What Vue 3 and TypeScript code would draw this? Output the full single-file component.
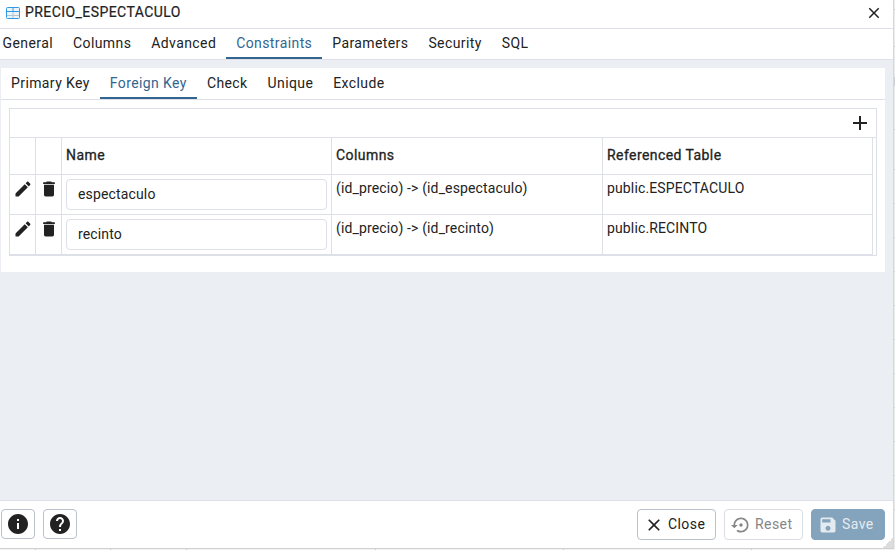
<script setup lang="ts">
import { ref } from 'vue'

interface ForeignKey {
  name: string
  columns: string
  referenced: string
}

const mainTabs: string[] = ['General', 'Columns', 'Advanced', 'Constraints', 'Parameters', 'Security', 'SQL']
const constraintTabs: string[] = ['Primary Key', 'Foreign Key', 'Check', 'Unique', 'Exclude']
const activeMain = ref('Constraints')
const activeConstraint = ref('Foreign Key')

const keys = ref<ForeignKey[]>([
  { name: 'espectaculo', columns: '(id_precio) -> (id_espectaculo)', referenced: 'public.ESPECTACULO' },
  { name: 'recinto', columns: '(id_precio) -> (id_recinto)', referenced: 'public.RECINTO' },
])

const closePath =
  'M19 6.41 17.59 5 12 10.59 6.41 5 5 6.41 10.59 12 5 17.59 6.41 19 12 13.41 17.59 19 19 17.59 13.41 12z'

// Row lines of the page that stay visible right of and below the dialog.
const sideLines: number[] = [10, 37, 39, 44, 40, 34, 34, 34, 34, 34, 34, 34, 34, 34, 34]
const bottomCells: number[] = [36, 75, 76, 189, 188, 188]
</script>

<template>
  <div class="page">
    <div class="upper">
      <section class="dialog">
        <header class="title-bar">
          <svg class="table-icon" viewBox="0 0 14 12">
            <rect x=".5" y=".5" width="13" height="11" rx="1" fill="#eef3f7" stroke="#2f9be8" />
            <path d="M1 8.5h12M7 4v7" stroke="#b5c6d3" fill="none" />
            <path d="M1 4.5h12M7 1v3" stroke="#2f9be8" fill="none" />
          </svg>
          <span class="title">PRECIO_ESPECTACULO</span>
          <svg class="close-icon" viewBox="0 0 24 24"><path :d="closePath" /></svg>
        </header>

        <nav class="tabs main-tabs">
          <button
            v-for="tab in mainTabs"
            :key="tab"
            class="tab"
            :class="{ active: tab === activeMain }"
            @click="activeMain = tab"
          >{{ tab }}</button>
        </nav>

        <main class="body">
          <div class="panel">
            <nav class="tabs sub-tabs">
              <button
                v-for="tab in constraintTabs"
                :key="tab"
                class="tab"
                :class="{ active: tab === activeConstraint }"
                @click="activeConstraint = tab"
              >{{ tab }}</button>
            </nav>
            <div class="grid-box">
              <div class="toolbar">
                <svg class="add-icon" viewBox="0 0 24 24"><path d="M19 13h-6v6h-2v-6H5v-2h6V5h2v6h6v2z" /></svg>
              </div>
              <div class="table">
                <div class="row head">
                  <div class="cell"></div>
                  <div class="cell"></div>
                  <div class="cell">Name</div>
                  <div class="cell">Columns</div>
                  <div class="cell">Referenced Table</div>
                </div>
                <div v-for="key in keys" :key="key.referenced" class="row">
                  <div class="cell icon-cell">
                    <svg viewBox="0 0 24 24"><path d="M3 17.25V21h3.75L17.81 9.94l-3.75-3.75L3 17.25zM20.71 7.04c.39-.39.39-1.02 0-1.41l-2.34-2.34c-.39-.39-1.02-.39-1.41 0l-1.83 1.83 3.75 3.75 1.83-1.83z" /></svg>
                  </div>
                  <div class="cell icon-cell">
                    <svg viewBox="0 0 24 24"><path d="M6 19c0 1.1.9 2 2 2h8c1.1 0 2-.9 2-2V7H6v12zM19 4h-3.5l-1-1h-5l-1 1H5v2h14V4z" /></svg>
                  </div>
                  <div class="cell"><input v-model="key.name" class="name-input" type="text" /></div>
                  <div class="cell">{{ key.columns }}</div>
                  <div class="cell">{{ key.referenced }}</div>
                </div>
              </div>
            </div>
          </div>
        </main>

        <footer class="footer">
          <button class="btn icon-btn">
            <svg viewBox="0 0 24 24"><path d="M12 2C6.48 2 2 6.48 2 12s4.48 10 10 10 10-4.48 10-10S17.52 2 12 2zm1 15h-2v-6h2v6zm0-8h-2V7h2v2z" /></svg>
          </button>
          <button class="btn icon-btn">
            <svg viewBox="0 0 24 24"><path d="M12 2C6.48 2 2 6.48 2 12s4.48 10 10 10 10-4.48 10-10S17.52 2 12 2zm1 17h-2v-2h2v2zm2.07-7.75l-.9.92C13.45 12.9 13 13.5 13 15h-2v-.5c0-1.1.45-2.1 1.17-2.83l1.24-1.26c.37-.36.59-.86.59-1.41 0-1.1-.9-2-2-2s-2 .9-2 2H8c0-2.21 1.79-4 4-4s4 1.79 4 4c0 .88-.36 1.68-.93 2.25z" /></svg>
          </button>
          <span class="spacer"></span>
          <button class="btn close-btn">
            <svg viewBox="0 0 24 24"><path :d="closePath" /></svg>
            <span>Close</span>
          </button>
          <button class="btn reset-btn" disabled>
            <svg viewBox="0 0 24 24"><path d="M14 12c0-1.1-.9-2-2-2s-2 .9-2 2 .9 2 2 2 2-.9 2-2zm-2-9c-4.97 0-9 4.03-9 9H0l4 4 4-4H5c0-3.87 3.13-7 7-7s7 3.13 7 7-3.13 7-7 7c-1.51 0-2.91-.49-4.06-1.3l-1.42 1.44C8.04 20.3 9.94 21 12 21c4.97 0 9-4.03 9-9s-4.03-9-9-9z" /></svg>
            <span>Reset</span>
          </button>
          <button class="btn save-btn" disabled>
            <svg viewBox="0 0 24 24"><path d="M17 3H5c-1.11 0-2 .9-2 2v14c0 1.1.89 2 2 2h14c1.1 0 2-.9 2-2V7l-4-4zm-5 16c-1.66 0-3-1.34-3-3s1.34-3 3-3 3 1.34 3 3-1.34 3-3 3zm3-10H5V5h10v4z" /></svg>
            <span>Save</span>
          </button>
          <i class="resize-handle"></i>
        </footer>
      </section>
      <aside class="side-strip">
        <i v-for="(h, i) in sideLines" :key="i" :style="{ height: h + 'px' }"></i>
      </aside>
    </div>
    <div class="bottom-strip">
      <i v-for="(w, i) in bottomCells" :key="i" :style="{ width: w + 'px' }"></i>
    </div>
  </div>
</template>

<style>
body {
  margin: 0;
  overflow: hidden;
}
</style>

<style scoped>
.page {
  width: 895px;
  height: 550px;
  display: flex;
  flex-direction: column;
  overflow: hidden;
  background: #f3f3f3;
  color: #222;
  font: 14px/21px Roboto, sans-serif;
}
.page *,
.page {
  box-sizing: border-box;
}
svg {
  display: block;
  flex: none;
  fill: currentColor;
}
button {
  font: inherit;
  color: inherit;
  background: none;
  border: 0;
  padding: 0;
}
.upper {
  display: flex;
  height: 549px;
}
.dialog {
  width: 894px;
  display: flex;
  flex-direction: column;
  background: #fff;
  border-right: 1px solid #d5d7dc;
  border-bottom: 1px solid #d0d0d0;
}
.title-bar {
  height: 29px;
  flex: none;
  display: flex;
  align-items: center;
  padding: 0 10px 4px 6px;
  border-bottom: 1px solid #dde0e6;
}
.table-icon {
  width: 14px;
  height: 12px;
  margin: 1px 5px 0 0;
}
.title {
  flex: 1;
  letter-spacing: 0.43px;
  -webkit-text-stroke: 0.2px currentColor;
}
.close-icon {
  width: 18px;
  height: 18px;
  margin-top: 1px;
}
.tabs {
  display: flex;
  flex: none;
  height: 31px;
  border-bottom: 1px solid #dde0e6;
}
.main-tabs {
  margin-left: -7.4px;
}
.tab {
  padding: 0 10px;
  height: 30px;
  line-height: 26px;
  padding-bottom: 2px;
  letter-spacing: 0.4px;
  white-space: nowrap;
}
.tab.active {
  color: #326690;
  box-shadow: inset 0 -2px #326690;
}
.body {
  flex: 1;
  background: #ebeef3;
  padding: 8px 8px 0 1px;
  border-bottom: 1px solid #dde0e6;
}
.panel {
  height: 204px;
  background: #fff;
}
.sub-tabs {
  height: 32px;
}
.sub-tabs .tab {
  height: 31px;
  line-height: 28px;
}
.grid-box {
  margin: 8px 8px 0;
  height: 148px;
  border: 1px solid #dde0e6;
}
.toolbar {
  height: 29px;
  display: flex;
  justify-content: flex-end;
  align-items: center;
  padding-right: 4px;
  border-bottom: 1px solid #dde0e6;
}
.add-icon {
  width: 24px;
  height: 24px;
}
.table {
  width: 863px;
}
.row {
  display: grid;
  grid-template-columns: 26px 26px 270px 271px 270px;
  height: 40px;
  letter-spacing: 0.14px;
}
.row.head {
  height: 37px;
  letter-spacing: 0.43px;
  -webkit-text-stroke: 0.3px currentColor;
}
.cell {
  border-right: 1px solid #dde0e6;
  border-bottom: 1px solid #dde0e6;
  padding: 3px 4px;
  white-space: nowrap;
}
.head .cell {
  padding-top: 7px;
}
.icon-cell {
  display: flex;
  justify-content: center;
  padding: 4px 0;
}
.icon-cell svg {
  width: 20px;
  height: 20px;
}
.name-input {
  display: block;
  width: 261px;
  height: 31px;
  margin-top: 1px;
  padding: 0 11px 2px;
  border: 1px solid #dde0e6;
  border-radius: 4px;
  outline: 0;
  background: #fff;
  color: #222;
  font: 14px Roboto, sans-serif;
  letter-spacing: 0.15px;
}
.footer {
  position: relative;
  height: 47px;
  flex: none;
  display: flex;
  align-items: center;
  gap: 8px;
  padding: 0 8px 0 1px;
}
.spacer {
  flex: 1;
}
.btn {
  display: flex;
  align-items: center;
  height: 31px;
  padding-left: 6px;
  border: 1px solid #bac1cd;
  border-radius: 4px;
  letter-spacing: 0.42px;
}
.icon-btn {
  width: 34px;
  height: 30px;
  margin-bottom: 1px;
  padding: 0;
  justify-content: center;
}
.icon-btn svg {
  width: 24px;
  height: 24px;
}
.btn span {
  margin-left: 4px;
}
.close-btn {
  width: 79px;
}
.btn:not(.icon-btn) svg {
  width: 20px;
  height: 20px;
}
.btn.reset-btn {
  width: 79px;
  padding-left: 6px;
  color: #868686;
  border-color: #dadde3;
}
.save-btn {
  width: 74px;
  color: #e4ebf0;
  border-color: #84a3bc;
  background: #84a3bc;
}
.resize-handle {
  position: absolute;
  right: 0;
  bottom: 0;
  width: 10px;
  height: 10px;
  background: linear-gradient(135deg, transparent 50%, #dcdcdc 50%);
}
.side-strip {
  width: 1px;
  overflow: hidden;
  background: #ececec;
}
.side-strip i {
  display: block;
  border-bottom: 1px solid #cfd1d6;
}
.side-strip i:nth-child(3) {
  border-bottom-width: 9px;
}
.bottom-strip {
  display: flex;
  height: 1px;
  overflow: hidden;
}
.bottom-strip i {
  flex: none;
  border-right: 1px solid #ccc;
}
</style>
